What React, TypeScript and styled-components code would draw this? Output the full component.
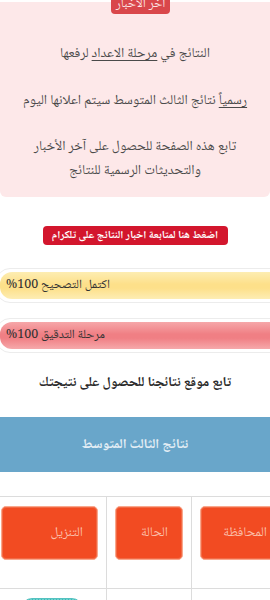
import styled, { createGlobalStyle } from 'styled-components';

const GlobalStyle = createGlobalStyle`
  html, body {
    margin: 0;
    padding: 0;
    background: #ffffff;
    overflow: hidden;
  }
  body {
    font-family: 'Noto Naskh Arabic', 'DejaVu Sans', sans-serif;
  }
`;

const Page = styled.div`
  width: 270px;
  padding-top: 2px;
  overflow: hidden;
`;

const NewsBox = styled.section`
  position: relative;
  direction: rtl;
  background: #fde8e9;
  padding: 40px 4px 14px;
  display: flex;
  flex-direction: column;
  align-items: center;
  border-radius: 0 0 6px 6px;
`;

const NewsBadge = styled.div`
  position: absolute;
  top: -9px;
  left: 111px;
  width: 59px;
  height: 21px;
  box-sizing: border-box;
  padding-top: 3px;
  background: #d9474b;
  color: #fde4e4;
  font-size: 13px;
  line-height: 17px;
  white-space: nowrap;
  text-align: center;
  border-radius: 0 0 4px 4px;
`;

const NewsLine = styled.p<{ $gap?: number }>`
  margin: 0 0 ${(p) => p.$gap ?? 0}px;
  color: #4a4a4a;
  font-size: 13.7px;
  line-height: 24px;
  text-align: center;
  white-space: nowrap;
`;

const Underlined = styled.span`
  text-decoration: underline;
  text-underline-offset: 3px;
`;

const TelegramRow = styled.div`
  display: flex;
  justify-content: center;
  padding: 29px 0 0;
`;

const TelegramButton = styled.a`
  direction: rtl;
  display: block;
  width: 185px;
  height: 19px;
  background: #d3162d;
  color: #ffffff;
  font-size: 10.9px;
  font-weight: bold;
  line-height: 19px;
  white-space: nowrap;
  text-align: center;
  border-radius: 4px;
`;

const Bars = styled.div`
  display: flex;
  flex-direction: column;
  gap: 15px;
  padding-top: 23px;
`;

const BarShell = styled.div`
  margin-left: -4px;
  width: 300px;
  padding: 3px;
  border: 1px solid #ececec;
  border-radius: 14px;
  background: #fff;
`;

const Bar = styled.div<{ $tone: 'yellow' | 'red' }>`
  height: 27px;
  border-radius: 12px;
  display: flex;
  align-items: center;
  padding-left: 6px;
  color: #333;
  font-size: 12.5px;
  background: ${(p) =>
    p.$tone === 'yellow'
      ? 'linear-gradient(#fdedb2, #fde08a 45%, #fde08a 60%, #fdedb4)'
      : 'linear-gradient(#f6a7a9, #f07f84 45%, #f07f84 60%, #f6a9ab)'};
`;

const BarText = styled.span`
  direction: rtl;
`;

const FollowTitle = styled.h2`
  direction: rtl;
  margin: 0;
  padding: 20px 0 0;
  height: 20px;
  text-align: center;
  color: #2a2a2a;
  font-size: 13.7px;
  font-weight: bold;
  line-height: 20px;
  white-space: nowrap;
`;

const GradeHeader = styled.div`
  direction: rtl;
  margin-top: 24px;
  height: 55px;
  background: #69a6ca;
  color: #e4eef5;
  font-size: 13.6px;
  font-weight: bold;
  display: flex;
  align-items: center;
  justify-content: center;
`;

const Table = styled.div`
  margin-top: 24px;
  margin-left: -7px;
  display: grid;
  grid-template-columns: 114px 85px 98px;
  border-top: 1px solid #dcdcdc;
`;

const Cell = styled.div<{ $last?: boolean; $head?: boolean }>`
  box-sizing: border-box;
  padding: ${(p) => (p.$head ? '9px 8px 28px' : '9px 8px 0')};
  height: ${(p) => (p.$head ? '92px' : '40px')};
  border-right: ${(p) => (p.$last ? 'none' : '1px solid #dcdcdc')};
  border-bottom: ${(p) => (p.$head ? '1px solid #dcdcdc' : 'none')};
`;

const HeadButton = styled.div`
  direction: rtl;
  box-sizing: border-box;
  height: 54px;
  background: #f24b22;
  border: 1px solid #f9a88e;
  box-shadow: inset 0 0 0 1px #f26a45;
  border-radius: 5px;
  color: #fbbfa9;
  font-size: 13.3px;
  display: flex;
  align-items: center;
  padding-right: 14px;
`;

const DownloadPill = styled.div`
  margin-left: 20px;
  width: 60px;
  height: 22px;
  border-radius: 11px;
  background: radial-gradient(circle, #3fb7b7 1px, #6fd3d0 1.2px) 0 0 / 3px 3px;
  border: 1px solid #54c2c0;
`;

export default function App() {
  return (
    <Page>
      <GlobalStyle />
      <NewsBox>
        <NewsBadge>آخر الأخبار</NewsBadge>
        <NewsLine $gap={23}>
          النتائج في <Underlined>مرحلة الاعداد</Underlined> لرفعها
        </NewsLine>
        <NewsLine $gap={22}>
          <Underlined>رسمياً</Underlined> نتائج الثالث المتوسط سيتم اعلانها اليوم
        </NewsLine>
        <NewsLine>
          تابع هذه الصفحة للحصول على آخر الأخبار
          <br />
          والتحديثات الرسمية للنتائج
        </NewsLine>
      </NewsBox>

      <TelegramRow>
        <TelegramButton>اضغط هنا لمتابعة اخبار النتائج على تلكرام</TelegramButton>
      </TelegramRow>

      <Bars>
        <BarShell>
          <Bar $tone="yellow">
            <BarText>اكتمل التصحيح 100%</BarText>
          </Bar>
        </BarShell>
        <BarShell>
          <Bar $tone="red">
            <BarText>مرحلة التدقيق 100%</BarText>
          </Bar>
        </BarShell>
      </Bars>

      <FollowTitle>تابع موقع نتائجنا للحصول على نتيجتك</FollowTitle>

      <GradeHeader>نتائج الثالث المتوسط</GradeHeader>

      <Table>
        <Cell $head>
          <HeadButton>التنزيل</HeadButton>
        </Cell>
        <Cell $head>
          <HeadButton>الحالة</HeadButton>
        </Cell>
        <Cell $head $last>
          <HeadButton>المحافظة</HeadButton>
        </Cell>
        <Cell>
          <DownloadPill />
        </Cell>
        <Cell />
        <Cell $last />
      </Table>
    </Page>
  );
}
